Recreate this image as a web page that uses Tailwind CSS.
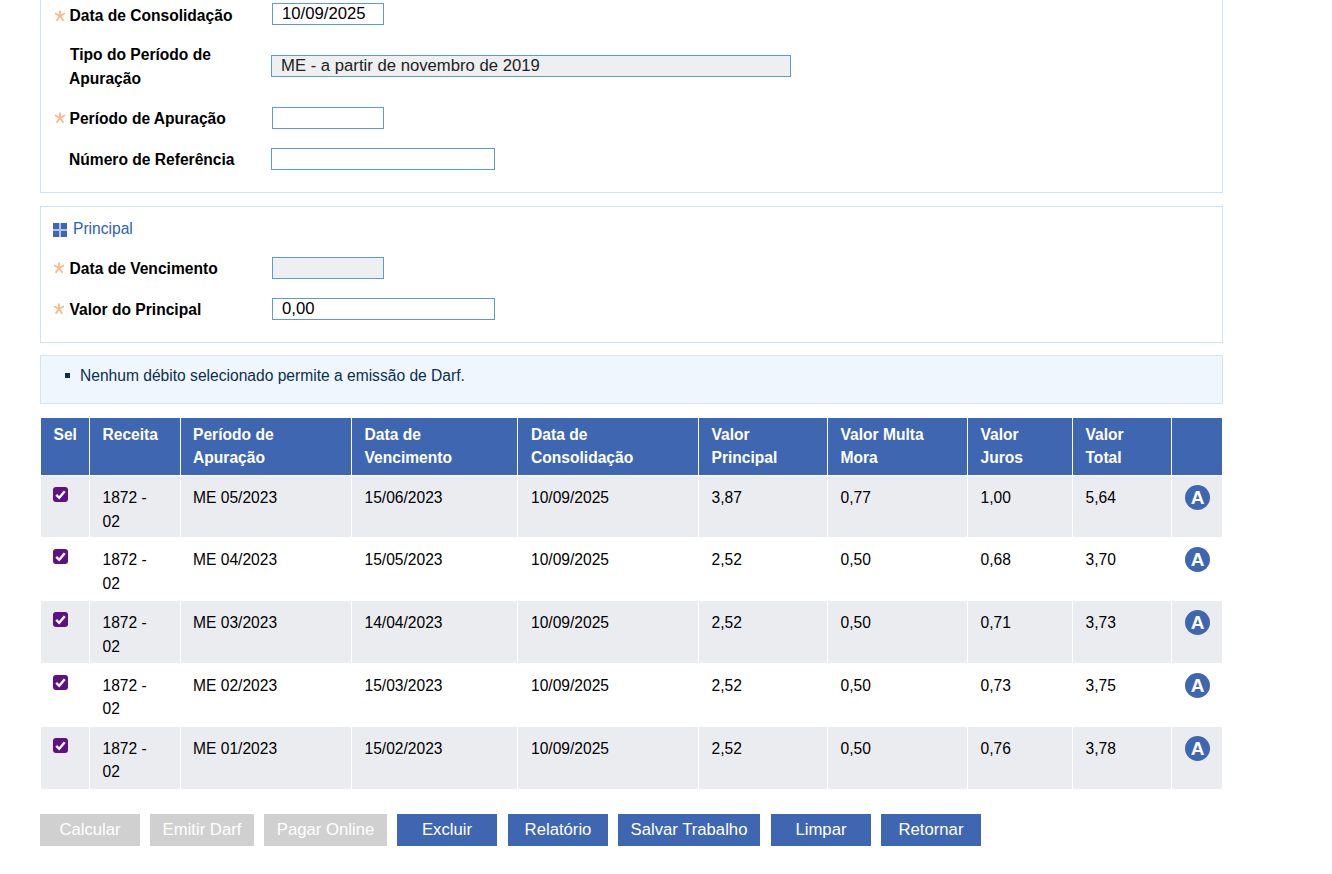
<!DOCTYPE html>
<html lang="pt-BR">
<head>
    <meta charset="UTF-8">
    <meta name="viewport" content="width=device-width, initial-scale=1.0">
    <title>Consolidação</title>
    <script src="https://cdn.jsdelivr.net/npm/@tailwindcss/browser@4"></script>
</head>
<body class="bg-white text-black font-['Liberation_Sans',Arial,sans-serif] text-[15.6px] h-[874px] overflow-hidden">
    <div class="w-[1183px] ml-[40px]">

        <!-- dados da consolidacao -->
        <div class="h-[193px] border-x border-b border-[#cfe3f1]">
            <div class="flex items-center h-[32px]">
                <svg width="12" height="12" viewBox="0 0 12 12" class="ml-[13px] mr-[3.5px] shrink-0"><path d="M6 6V.5M6 6L11 3.2M6 6l3.4 4.8M6 6l-3.4 4.8M6 6L1 3.2" stroke="#fcb885" stroke-width="1.8" fill="none"/></svg>
                <label class="w-[202.5px] font-bold -mt-[1px]">Data de Consolidação</label>
                <input value="10/09/2025" class="w-[112px] h-[22px] -mt-[4px] border border-[#5b9bd0] pl-[9px] text-[16.7px]">
            </div>
            <div class="flex items-center h-[48px] mt-[10px]">
                <label class="w-[202px] ml-[28px] font-bold leading-[24px] pt-[2px]"><span class="ml-[1px]">Tipo do Período de</span><br>Apuração</label>
                <input value="ME - a partir de novembro de 2019" disabled class="w-[520px] h-[22px] border border-[#5b9bd0] bg-[#eeeff0] pl-[9px] text-[16.7px] text-[#222]">
            </div>
            <div class="flex items-center h-[22px] mt-[17px]">
                <svg width="12" height="12" viewBox="0 0 12 12" class="ml-[13px] mr-[3.5px] shrink-0"><path d="M6 6V.5M6 6L11 3.2M6 6l3.4 4.8M6 6l-3.4 4.8M6 6L1 3.2" stroke="#fcb885" stroke-width="1.8" fill="none"/></svg>
                <label class="w-[202.5px] font-bold pt-[2px]">Período de Apuração</label>
                <input class="w-[112px] h-[22px] border border-[#5b9bd0]">
            </div>
            <div class="flex items-center h-[22px] mt-[19px]">
                <label class="w-[202px] ml-[28px] font-bold pt-[2px]">Número de Referência</label>
                <input class="w-[224px] h-[22px] border border-[#5b9bd0]">
            </div>
        </div>

        <!-- principal -->
        <div class="h-[137px] mt-[13px] border border-[#cfe3f1]">
            <div class="flex items-center gap-[6px] ml-[12px] mt-[11px] h-[21px] text-[#2a62b8]">
                <svg width="14" height="14" viewBox="0 0 14 14" class="mt-[2px]">
                    <rect width="14" height="14" fill="#b4c5e2"/>
                    <rect x="0" y="0" width="6" height="6" fill="#3f67b1"/>
                    <rect x="8" y="0" width="6" height="6" fill="#3f67b1"/>
                    <rect x="0" y="8" width="6" height="6" fill="#3f67b1"/>
                    <rect x="8" y="8" width="6" height="6" fill="#3f67b1"/>
                </svg>
                <span>Principal</span>
            </div>
            <div class="flex items-center h-[22px] mt-[18px]">
                <svg width="12" height="12" viewBox="0 0 12 12" class="ml-[12px] mr-[4.5px] shrink-0"><path d="M6 6V.5M6 6L11 3.2M6 6l3.4 4.8M6 6l-3.4 4.8M6 6L1 3.2" stroke="#fcb885" stroke-width="1.8" fill="none"/></svg>
                <label class="w-[202.5px] font-bold pt-[2px]">Data de Vencimento</label>
                <input disabled class="w-[112px] h-[22px] border border-[#5b9bd0] bg-[#eeeff0]">
            </div>
            <div class="flex items-center h-[22px] mt-[19px]">
                <svg width="12" height="12" viewBox="0 0 12 12" class="ml-[12px] mr-[4.5px] shrink-0"><path d="M6 6V.5M6 6L11 3.2M6 6l3.4 4.8M6 6l-3.4 4.8M6 6L1 3.2" stroke="#fcb885" stroke-width="1.8" fill="none"/></svg>
                <label class="w-[202.5px] font-bold pt-[2px]">Valor do Principal</label>
                <input value="0,00" class="w-[223px] h-[22px] border border-[#5b9bd0] pl-[9px] text-[16.7px]">
            </div>
        </div>

        <!-- mensagem -->
        <div class="h-[49px] mt-[12px] border border-[#d3e4f0] bg-[#eff6fd] text-[#0b2f52] flex items-start pt-[8px]">
            <span class="w-[5px] h-[5px] bg-[#0b2f52] ml-[24px] mt-[9px]"></span>
            <span class="ml-[10px] leading-[23px]">Nenhum débito selecionado permite a emissão de Darf.</span>
        </div>

        <!-- debitos -->
        <table class="table-fixed border-collapse w-[1182px] mt-[14px]">
            <colgroup>
                <col class="w-[49px]"><col class="w-[91px]"><col class="w-[171px]"><col class="w-[166px]"><col class="w-[181px]">
                <col class="w-[129px]"><col class="w-[140px]"><col class="w-[105px]"><col class="w-[99px]"><col class="w-[51px]">
            </colgroup>
            <thead>
                <tr class="h-[57px] bg-[#3f67b1] text-white font-bold text-left align-top leading-[23px]">
                    <th class="border-x border-white pt-[5px] px-[12.5px]">Sel</th>
                    <th class="border-x border-white pt-[5px] px-[12.5px]">Receita</th>
                    <th class="border-x border-white pt-[5px] px-[12px]">Período de Apuração</th>
                    <th class="border-x border-white pt-[5px] px-[12.5px]">Data de Vencimento</th>
                    <th class="border-x border-white pt-[5px] px-[13px]">Data de Consolidação</th>
                    <th class="border-x border-white pt-[5px] px-[12.5px]">Valor Principal</th>
                    <th class="border-x border-white pt-[5px] px-[12.5px]">Valor Multa Mora</th>
                    <th class="border-x border-white pt-[5px] px-[12.5px]">Valor Juros</th>
                    <th class="border-x border-white pt-[5px] px-[12.5px]">Valor Total</th>
                    <th class="border-x border-white"></th>
                </tr>
            </thead>
            <tbody class="leading-[23px] align-top">
                <tr class="h-[62px] bg-[#ebecf0]">
                    <td class="border border-white pt-[11px] px-[12px]"><span class="block w-[15px] h-[15px] rounded-[3px] bg-[#5f1082]"><svg viewBox="0 0 15 15" class="w-[15px] h-[15px]"><path d="M3.2 7.8l3 3 5.6-6.6" fill="none" stroke="#fff" stroke-width="2.4"/></svg></span></td>
                    <td class="border border-white pt-[10px] px-[12.5px] leading-[24px]">1872 -<br>02</td>
                    <td class="border border-white pt-[10px] px-[12px]">ME 05/2023</td>
                    <td class="border border-white pt-[10px] px-[12.5px]">15/06/2023</td>
                    <td class="border border-white pt-[10px] px-[13px]">10/09/2025</td>
                    <td class="border border-white pt-[10px] px-[12.5px]">3,87</td>
                    <td class="border border-white pt-[10px] px-[12.5px]">0,77</td>
                    <td class="border border-white pt-[10px] px-[12.5px]">1,00</td>
                    <td class="border border-white pt-[10px] px-[12.5px]">5,64</td>
                    <td class="border border-white pt-[9px]"><span class="block w-[25px] h-[25px] ml-[13px] rounded-full bg-[#3f67b1] text-white text-center font-bold text-[19px] leading-[25px]">A</span></td>
                </tr>
                <tr class="h-[63px] bg-white">
                    <td class="border border-white pt-[11px] px-[12px]"><span class="block w-[15px] h-[15px] rounded-[3px] bg-[#5f1082]"><svg viewBox="0 0 15 15" class="w-[15px] h-[15px]"><path d="M3.2 7.8l3 3 5.6-6.6" fill="none" stroke="#fff" stroke-width="2.4"/></svg></span></td>
                    <td class="border border-white pt-[10px] px-[12.5px] leading-[24px]">1872 -<br>02</td>
                    <td class="border border-white pt-[10px] px-[12px]">ME 04/2023</td>
                    <td class="border border-white pt-[10px] px-[12.5px]">15/05/2023</td>
                    <td class="border border-white pt-[10px] px-[13px]">10/09/2025</td>
                    <td class="border border-white pt-[10px] px-[12.5px]">2,52</td>
                    <td class="border border-white pt-[10px] px-[12.5px]">0,50</td>
                    <td class="border border-white pt-[10px] px-[12.5px]">0,68</td>
                    <td class="border border-white pt-[10px] px-[12.5px]">3,70</td>
                    <td class="border border-white pt-[9px]"><span class="block w-[25px] h-[25px] ml-[13px] rounded-full bg-[#3f67b1] text-white text-center font-bold text-[19px] leading-[25px]">A</span></td>
                </tr>
                <tr class="h-[63px] bg-[#ebecf0]">
                    <td class="border border-white pt-[11px] px-[12px]"><span class="block w-[15px] h-[15px] rounded-[3px] bg-[#5f1082]"><svg viewBox="0 0 15 15" class="w-[15px] h-[15px]"><path d="M3.2 7.8l3 3 5.6-6.6" fill="none" stroke="#fff" stroke-width="2.4"/></svg></span></td>
                    <td class="border border-white pt-[10px] px-[12.5px] leading-[24px]">1872 -<br>02</td>
                    <td class="border border-white pt-[10px] px-[12px]">ME 03/2023</td>
                    <td class="border border-white pt-[10px] px-[12.5px]">14/04/2023</td>
                    <td class="border border-white pt-[10px] px-[13px]">10/09/2025</td>
                    <td class="border border-white pt-[10px] px-[12.5px]">2,52</td>
                    <td class="border border-white pt-[10px] px-[12.5px]">0,50</td>
                    <td class="border border-white pt-[10px] px-[12.5px]">0,71</td>
                    <td class="border border-white pt-[10px] px-[12.5px]">3,73</td>
                    <td class="border border-white pt-[9px]"><span class="block w-[25px] h-[25px] ml-[13px] rounded-full bg-[#3f67b1] text-white text-center font-bold text-[19px] leading-[25px]">A</span></td>
                </tr>
                <tr class="h-[63px] bg-white">
                    <td class="border border-white pt-[11px] px-[12px]"><span class="block w-[15px] h-[15px] rounded-[3px] bg-[#5f1082]"><svg viewBox="0 0 15 15" class="w-[15px] h-[15px]"><path d="M3.2 7.8l3 3 5.6-6.6" fill="none" stroke="#fff" stroke-width="2.4"/></svg></span></td>
                    <td class="border border-white pt-[10px] px-[12.5px]">1872 -<br>02</td>
                    <td class="border border-white pt-[10px] px-[12px]">ME 02/2023</td>
                    <td class="border border-white pt-[10px] px-[12.5px]">15/03/2023</td>
                    <td class="border border-white pt-[10px] px-[13px]">10/09/2025</td>
                    <td class="border border-white pt-[10px] px-[12.5px]">2,52</td>
                    <td class="border border-white pt-[10px] px-[12.5px]">0,50</td>
                    <td class="border border-white pt-[10px] px-[12.5px]">0,73</td>
                    <td class="border border-white pt-[10px] px-[12.5px]">3,75</td>
                    <td class="border border-white pt-[9px]"><span class="block w-[25px] h-[25px] ml-[13px] rounded-full bg-[#3f67b1] text-white text-center font-bold text-[19px] leading-[25px]">A</span></td>
                </tr>
                <tr class="h-[63px] bg-[#ebecf0]">
                    <td class="border border-white pt-[11px] px-[12px]"><span class="block w-[15px] h-[15px] rounded-[3px] bg-[#5f1082]"><svg viewBox="0 0 15 15" class="w-[15px] h-[15px]"><path d="M3.2 7.8l3 3 5.6-6.6" fill="none" stroke="#fff" stroke-width="2.4"/></svg></span></td>
                    <td class="border border-white pt-[10px] px-[12.5px]">1872 -<br>02</td>
                    <td class="border border-white pt-[10px] px-[12px]">ME 01/2023</td>
                    <td class="border border-white pt-[10px] px-[12.5px]">15/02/2023</td>
                    <td class="border border-white pt-[10px] px-[13px]">10/09/2025</td>
                    <td class="border border-white pt-[10px] px-[12.5px]">2,52</td>
                    <td class="border border-white pt-[10px] px-[12.5px]">0,50</td>
                    <td class="border border-white pt-[10px] px-[12.5px]">0,76</td>
                    <td class="border border-white pt-[10px] px-[12.5px]">3,78</td>
                    <td class="border border-white pt-[9px]"><span class="block w-[25px] h-[25px] ml-[13px] rounded-full bg-[#3f67b1] text-white text-center font-bold text-[19px] leading-[25px]">A</span></td>
                </tr>
            </tbody>
        </table>

        <!-- botoes -->
        <div class="flex gap-[10px] mt-[24px] text-white text-[16.7px]">
            <button disabled class="w-[100px] h-[32px] bg-[#d0d0d0]">Calcular</button>
            <button disabled class="w-[104px] h-[32px] bg-[#d0d0d0]">Emitir Darf</button>
            <button disabled class="w-[123px] h-[32px] bg-[#d0d0d0]">Pagar Online</button>
            <button class="w-[100px] h-[32px] bg-[#3f67b1]">Excluir</button>
            <button class="w-[100px] h-[32px] bg-[#3f67b1] ml-[1px]">Relatório</button>
            <button class="w-[142px] h-[32px] bg-[#3f67b1]">Salvar Trabalho</button>
            <button class="w-[100px] h-[32px] bg-[#3f67b1] ml-[1px]">Limpar</button>
            <button class="w-[100px] h-[32px] bg-[#3f67b1]">Retornar</button>
        </div>
    </div>
</body>
</html>
